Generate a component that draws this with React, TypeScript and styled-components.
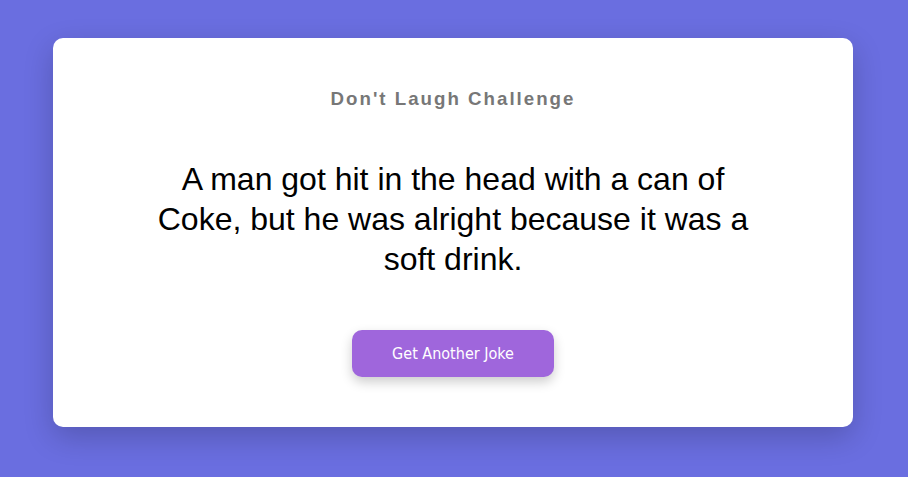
import React from "react";
import styled, { createGlobalStyle } from "styled-components";

const Global = createGlobalStyle`
  html, body { margin: 0; padding: 0; }
  body {
    background: #6a6ee0;
    min-height: 477px;
    font-family: "Liberation Sans", Arial, sans-serif;
  }
`;

const Page = styled.div`
  display: flex;
  justify-content: center;
  padding: 38px 2px 50px 0;
`;

const Card = styled.div`
  width: 800px;
  box-sizing: border-box;
  background: #fff;
  border-radius: 10px;
  box-shadow: 0 10px 30px rgba(0, 0, 0, 0.2);
  padding: 50px 40px;
  display: flex;
  flex-direction: column;
  align-items: center;
  gap: 50px;
`;

const Title = styled.h1`
  margin: 0;
  font-size: 18.72px;
  line-height: 21px;
  font-weight: bold;
  letter-spacing: 2px;
  color: #777;
`;

const Joke = styled.p`
  margin: 0;
  padding-bottom: 1px;
  max-width: 600px;
  font-size: 32px;
  line-height: 40px;
  text-align: center;
  color: #000;
`;

const Button = styled.button`
  width: 202px;
  height: 47px;
  border: none;
  border-radius: 10px;
  background: #9f66dc;
  color: #fff;
  font-family: "DejaVu Sans Condensed", "DejaVu Sans", Verdana, sans-serif;
  font-stretch: condensed;
  font-size: 16px;
  box-shadow: 0 5px 12px rgba(0, 0, 0, 0.2);
  cursor: pointer;
`;

export default function App() {
  return (
    <>
      <Global />
      <Page>
        <Card>
          <Title>Don't Laugh Challenge</Title>
          <Joke>
            A man got hit in the head with a can of Coke, but he was alright
            because it was a soft drink.
          </Joke>
          <Button>Get Another Joke</Button>
        </Card>
      </Page>
    </>
  );
}
